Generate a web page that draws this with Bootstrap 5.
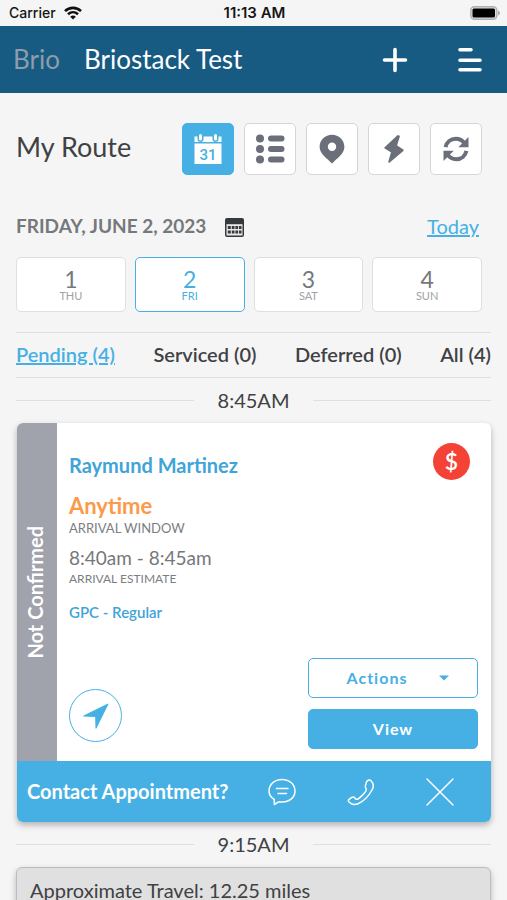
<!DOCTYPE html>
<html lang="en">
<head>
<meta charset="utf-8">
<meta name="viewport" content="width=device-width, initial-scale=1">
<title>My Route</title>
<link href="https://cdn.jsdelivr.net/npm/bootstrap@5.3.0/dist/css/bootstrap.min.css" rel="stylesheet">
<style>
:root { --sky: #46b0e4; --navy: #175a82; --slate: #6a6f7a; --line: #dfdfdf; }
body { font-family: Lato, sans-serif; background: #f5f5f5; color: #3f4144; }
svg { display: block; flex: none; }
.status-bar { height: 26px; padding: 0 7px 0 9px; font: 500 14px/26px Inter, sans-serif; color: #151515; }
.status-bar .side { flex: 1 1 0; }
.clock { font-size: 15px; font-weight: 600; }
.top-bar { height: 67px; padding: 0 25px 0 13px; background: var(--navy); font-size: 26px; line-height: 32px; }
.top-bar a, .top-bar span { padding-bottom: 2px; }
.brand-back { color: #8d9dab; }
.icon-btn { background: none; border: 0; padding: 0; color: inherit; }
.screen { padding: 30px 16px 0; scrollbar-width: none; overflow-y: auto; }
.inset { margin-right: 9px; }
.tools { gap: 10px; }
.page-title { font-size: 27px; line-height: 36px; font-weight: 400; margin: 0; padding-bottom: 4px; }
.tool { width: 52px; height: 52px; padding: 0; background: #fff; border: 1px solid #d6d6d6; border-radius: 5px; color: var(--slate); display: flex; align-items: center; justify-content: center; }
.tool.on { background: var(--sky); border-color: var(--sky); color: #fff; }
.date-row { gap: 19px; margin-top: 38px; height: 28px; }
.date-label { font-size: 19px; line-height: 26px; font-weight: 700; color: #75787c; margin: 0; padding-bottom: 2px; }
.link-sky { color: var(--sky); font-size: 20px; line-height: 26px; padding-bottom: 2px; margin-right: 3px; }
.days { margin-top: 16px; gap: 9px; }
.day { flex: 1 1 0; height: 55px; padding: 0 0 4px; background: #fff; border: 1px solid var(--line); border-radius: 5px; color: #75787c; }
.day .num { display: block; font-size: 23px; line-height: 24px; padding-top: 2px; }
.day .dow { display: block; font-size: 11px; line-height: 10px; color: #a0a2a5; }
.day.on { border-color: var(--sky); }
.day.on, .day.on .dow { color: var(--sky); }
.filters { margin-top: 20px; height: 46px; border-top: 1px solid var(--line); border-bottom: 1px solid var(--line); font-size: 20px; font-weight: 600; padding-bottom: 2px; }
.filters a { color: #3f4144; text-decoration: none; }
.filters a.on { color: var(--sky); text-decoration: underline; }
.slot { height: 45px; gap: 24px; font-size: 20px; line-height: 28px; }
.slot span { padding-bottom: 2px; }
.slot::before, .slot::after { content: ""; flex: 1 1 0; height: 1px; background: var(--line); }
.visit { border: 0; border-radius: 6px; margin-left: 1px; overflow: hidden; box-shadow: 0 3px 6px rgba(0,0,0,.28); }
.visit-state { width: 40px; background: #a0a3ab; color: #fff; font-size: 20px; font-weight: 700; padding-right: 4px; }
.visit-state span { writing-mode: vertical-rl; transform: rotate(180deg); }
.visit-main { padding: 20px 13px 12px 12px; }
.visit-name { font-size: 20px; line-height: 24px; font-weight: 700; color: #3fa4d8; margin: 10px 0 16px; }
.window { font-size: 22px; line-height: 26px; font-weight: 700; color: #fb9a4b; }
.caption-sm { font-size: 13px; line-height: 18px; color: #7b7e82; }
.estimate { margin-top: 9px; font-size: 19px; line-height: 24px; color: #75787c; }
.caption-xs { font-size: 12px; line-height: 18px; color: #7b7e82; }
.plan { margin-top: 14px; font-size: 15px; line-height: 20px; font-weight: 600; color: #3fa4d8; }
.due { width: 37px; height: 37px; margin-right: 8px; border-radius: 50%; background: #f44336; color: #fff; font-size: 23px; line-height: 37px; font-weight: 600; }
.visit-foot { padding-top: 36px; }
.nav-btn { width: 53px; height: 53px; margin-bottom: 7px; padding: 0; border: 1px solid var(--sky); border-radius: 50%; background: #fff; color: var(--sky); display: flex; align-items: center; justify-content: center; }
.stack { width: 170px; gap: 11px; }
.wide-btn { height: 40px; padding: 0; border: 1px solid var(--sky); border-radius: 5px; background: #fff; color: var(--sky); font-size: 16px; font-weight: 700; letter-spacing: 1px; }
.wide-btn.solid { background: var(--sky); color: #fff; }
.caret-gap { gap: 32px; padding-left: 10px; }
.contact { height: 61px; padding: 0 37px 0 10px; background: var(--sky); color: #fff; font-size: 20px; font-weight: 700; }
.contact > span { padding-bottom: 2px; }
.contact-icons { gap: 51px; }
.travel { border: 1px solid #bcbcbc; border-radius: 6px; background: #e0e0e0; padding: 10px 13px; font-size: 20px; line-height: 24px; height: 61px; box-shadow: 0 3px 6px rgba(0,0,0,.25); }
</style>
<script src="https://cdn.jsdelivr.net/npm/bootstrap@5.3.0/dist/js/bootstrap.bundle.min.js"></script>
</head>
<body>
<div class="d-flex flex-column vh-100">
  <div class="status-bar d-flex align-items-center flex-shrink-0">
    <div class="side d-flex align-items-center gap-2">
      <span>Carrier</span>
      <svg width="18" height="14" viewBox="0 0 18 14" fill="none" stroke="#111" stroke-width="2.6"><path d="M1 5.2C5.5.7 12.500.7 17 5.200M4 8.200c2.900-2.700 7.100-2.700 10 0"/><path d="M9 13.500 6.200 10.700q2.800-2.300 5.600 0Z" fill="#111" stroke="none"/></svg>
    </div>
    <span class="clock">11:13 AM</span>
    <div class="side d-flex justify-content-end">
      <svg width="30" height="14" viewBox="0 0 30 14"><rect x=".8" y=".8" width="26" height="12.400" rx="3.500" fill="#dedede" stroke="#b0b0b0" stroke-width="1.400"/><rect x="2.500" y="2.500" width="22.500" height="9" rx="1.500"/><path d="M28 4.500q2 1 2 2.500t-2 2.500Z" fill="#aaa"/></svg>
    </div>
  </div>
  <header class="top-bar d-flex align-items-center text-white flex-shrink-0">
    <a href="#" class="brand-back text-decoration-none">Brio</a>
    <span class="ms-4 me-auto">Briostack Test</span>
    <button class="icon-btn" aria-label="Add"><svg width="26" height="26" viewBox="0 0 26 26" stroke="#fff" stroke-width="3.600" stroke-linecap="round"><path d="M2.500 13h21M13 2.500v21"/></svg></button>
    <button class="icon-btn ms-5" aria-label="Menu"><svg width="26" height="26" viewBox="0 0 26 26" stroke="#fff" stroke-width="3.600" stroke-linecap="round"><path d="M4 2.800h11M4 13.300h20M4 22.800h20"/></svg></button>
  </header>
  <main class="screen flex-grow-1">
    <div class="inset d-flex align-items-center justify-content-between">
      <h1 class="page-title">My Route</h1>
      <div class="tools d-flex">
        <button class="tool on" aria-label="Calendar">
          <svg width="28" height="32" viewBox="0 0 28 32" fill="#fff"><path d="M.5 3.500h3V6a3 3 0 0 0 6 0V3.500h9V6a3 3 0 0 0 6 0V3.500h3V9H.5Z"/><rect x="5" y="1" width="3" height="6.500" rx="1.500"/><rect x="20" y="1" width="3" height="6.500" rx="1.500"/><path d="M.5 10.500h27V31H.5Z"/><text x="14" y="26.500" text-anchor="middle" font-family="Roboto, sans-serif" font-size="15" font-weight="500" fill="#46b0e4">31</text></svg>
        </button>
        <button class="tool" aria-label="List">
          <svg width="30" height="30" viewBox="0 0 30 30" fill="currentColor"><circle cx="5" cy="4.500" r="4"/><circle cx="5" cy="15" r="4"/><circle cx="5" cy="25.500" r="4"/><rect x="13" y="1.500" width="16.500" height="6" rx="3"/><rect x="13" y="12" width="16.500" height="6" rx="3"/><rect x="13" y="22.500" width="16.500" height="6" rx="3"/></svg>
        </button>
        <button class="tool" aria-label="Map">
          <svg width="26" height="30" viewBox="0 0 26 30" fill="currentColor" fill-rule="evenodd"><path d="M13 .7C6.200.7.600 6 .600 12.800c0 7.400 7.800 11.800 12.400 16.700 4.600-4.900 12.400-9.300 12.400-16.700C25.400 6 19.800.700 13 .7Zm0 7.800a4.200 4.200 0 1 1 0 8.400 4.200 4.200 0 0 1 0-8.400Z"/></svg>
        </button>
        <button class="tool" aria-label="Optimize">
          <svg width="20" height="28" viewBox="0 0 20 28" fill="currentColor" stroke="currentColor" stroke-width="1.800" stroke-linejoin="round"><path d="M14 1 1.200 12.800 8 17 5.200 26.800 18.800 15.200 12 10.800 15 1.300Z"/></svg>
        </button>
        <button class="tool" aria-label="Refresh">
          <svg width="26" height="26" viewBox="0 0 26 26" fill="none" stroke="currentColor" stroke-width="4"><path d="M2.600 11.200C3.600 6.200 7.800 2.800 12.800 2.800c3.600 0 6.600 1.700 8.600 4.600"/><path d="M25.500 1V11.200H15.300Z" fill="currentColor" stroke="none"/><path d="M23.400 14.800c-1 5-5.200 8.400-10.200 8.400-3.600 0-6.600-1.700-8.600-4.600"/><path d="M.5 25V14.800h10.200Z" fill="currentColor" stroke="none"/></svg>
        </button>
      </div>
    </div>
    <div class="date-row inset d-flex align-items-center">
      <h2 class="date-label">FRIDAY, JUNE 2, 2023</h2>
      <button class="icon-btn" aria-label="Pick a date">
        <svg width="19" height="19" viewBox="0 0 19 19"><rect width="19" height="19" rx="2" fill="#35383c"/><path d="M1.500 6.200h16v11.300h-16Z" fill="#e8e8e8"/><path d="M2.800 8h3v3h-3ZM6.800 8h2.700v3H6.800ZM10.400 8h2.700v3h-2.700ZM14 8h2.500v3H14ZM2.800 12.500h3v3h-3ZM6.800 12.500h2.700v3H6.800ZM10.400 12.500h2.700v3h-2.700ZM14 12.500h2.500v3H14Z" fill="#35383c"/></svg>
      </button>
      <a href="#" class="link-sky ms-auto">Today</a>
    </div>
    <div class="days inset d-flex">
      <button class="day"><span class="num">1</span><span class="dow">THU</span></button>
      <button class="day on"><span class="num">2</span><span class="dow">FRI</span></button>
      <button class="day"><span class="num">3</span><span class="dow">SAT</span></button>
      <button class="day"><span class="num">4</span><span class="dow">SUN</span></button>
    </div>
    <nav class="filters d-flex align-items-center justify-content-between">
      <a href="#" class="on">Pending (4)</a><a href="#">Serviced (0)</a><a href="#">Deferred (0)</a><a href="#">All (4)</a>
    </nav>
    <div class="slot d-flex align-items-center"><span>8:45AM</span></div>
    <article class="card visit">
      <div class="d-flex">
        <div class="visit-state d-flex align-items-center justify-content-center"><span>Not Confirmed</span></div>
        <div class="visit-main flex-grow-1">
          <div class="d-flex justify-content-between align-items-start">
            <div>
              <h3 class="visit-name">Raymund Martinez</h3>
              <div class="window">Anytime</div>
              <div class="caption-sm">ARRIVAL WINDOW</div>
              <div class="estimate">8:40am - 8:45am</div>
              <div class="caption-xs">ARRIVAL ESTIMATE</div>
              <div class="plan">GPC - Regular</div>
            </div>
            <div class="due text-center">$</div>
          </div>
          <div class="visit-foot d-flex justify-content-between align-items-end">
            <button class="nav-btn" aria-label="Navigate"><svg width="26" height="26" viewBox="0 0 26 26" fill="currentColor" stroke="currentColor" stroke-linejoin="round"><path d="M25 1 .700 13 12.700 13.500 13 25.300Z"/></svg></button>
            <div class="stack d-flex flex-column">
              <button class="wide-btn caret-gap d-flex align-items-center justify-content-center">Actions
                <svg width="10" height="6" viewBox="0 0 10 6" fill="currentColor"><path d="M0 .5h10L5 5.500Z"/></svg></button>
              <button class="wide-btn solid">View</button>
            </div>
          </div>
        </div>
      </div>
      <div class="contact d-flex align-items-center justify-content-between">
        <span>Contact Appointment?</span>
        <div class="contact-icons d-flex">
          <button class="icon-btn" aria-label="Message"><svg width="28" height="28" viewBox="0 0 28 28" fill="none" stroke="#fff" stroke-width="1.500" stroke-linejoin="round" stroke-linecap="round"><path d="M6.300 26.500v-5C2.800 19.500 1 16.500 1 13 1 6.500 6.500 1.500 14 1.500S27 6.500 27 13s-5.500 11-13 11c-1 0-1.900-.1-2.800-.3Z"/><path d="M8.500 10.500h11.500M10 15.500h8.500"/></svg></button>
          <button class="icon-btn" aria-label="Call"><svg width="28" height="28" viewBox="0 0 28 28" fill="none" stroke="#fff" stroke-width="1.500" stroke-linejoin="round"><path d="M19.600 3.600q2.600-2.600 4.400-.8 4.200 4.200 1 9.200C22 17.500 17 22.800 11.500 25.500Q6 28 2 24q-1.500-1.500.3-2.900l2.500-1.700q1.700-1 2.900.4l1.200 1.400c1.200.8 3.300-.8 6.100-3.600s4.800-4.800 4.200-6.100l-.6-2q-.6-1.600.2-2.900Z"/></svg></button>
          <button class="icon-btn" aria-label="Dismiss"><svg width="28" height="28" viewBox="0 0 28 28" stroke="#fff" stroke-width="1.500" stroke-linecap="round"><path d="m1 1 26 26M27 1 1 27"/></svg></button>
        </div>
      </div>
    </article>
    <div class="slot d-flex align-items-center"><span>9:15AM</span></div>
    <div class="travel">Approximate Travel: 12.25 miles</div>
  </main>
</div>
</body>
</html>
